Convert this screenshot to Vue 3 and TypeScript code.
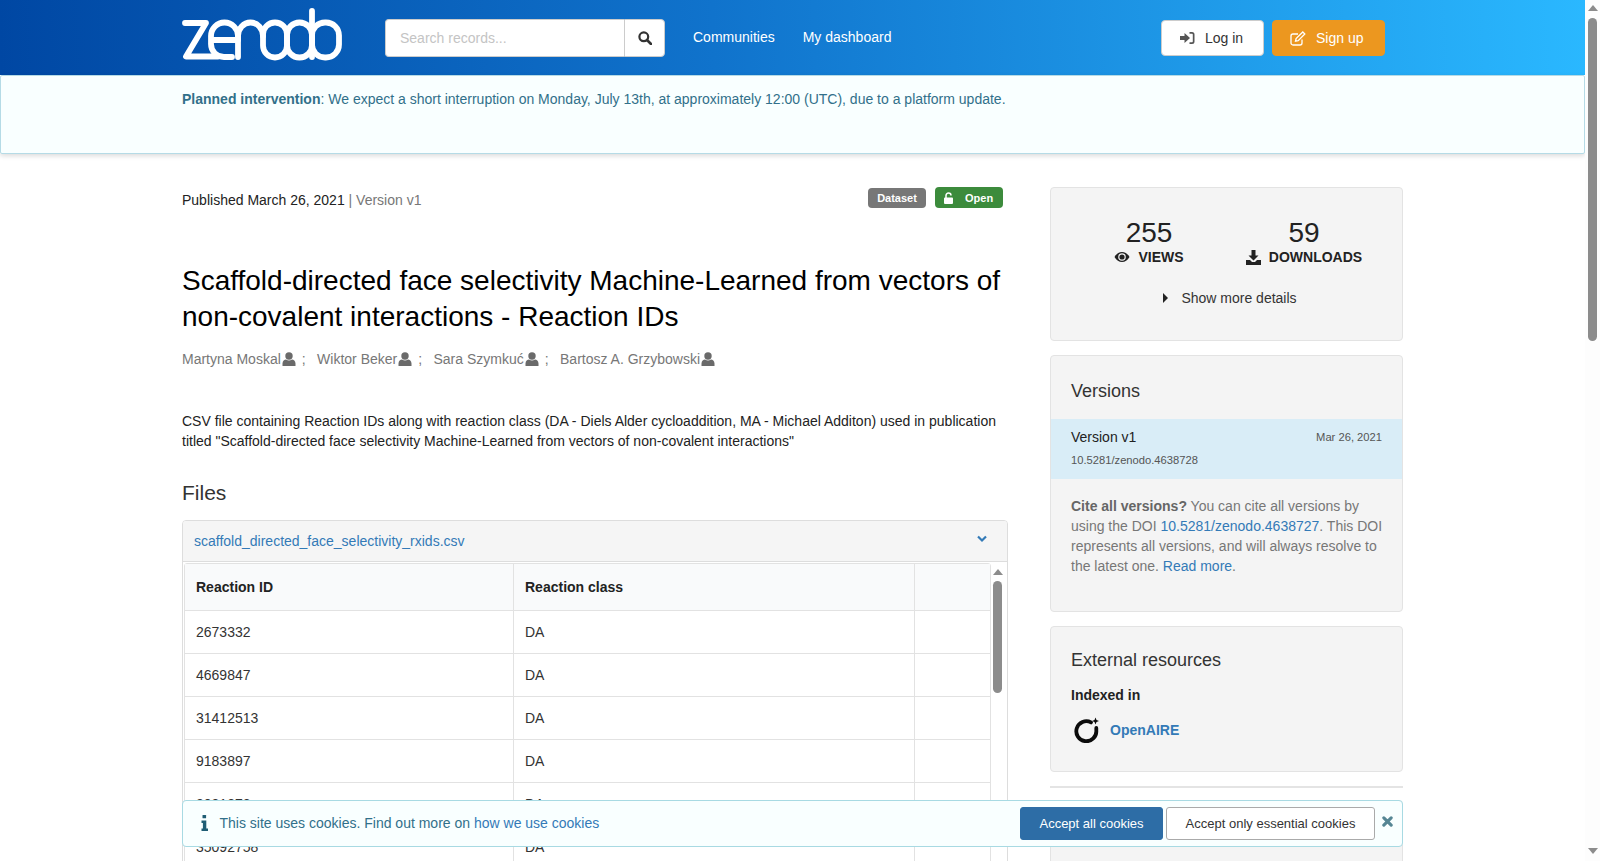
<script setup lang="ts">
const authors: string[] = ['Martyna Moskal', 'Wiktor Beker', 'Sara Szymkuć', 'Bartosz A. Grzybowski']
const rows: string[] = ['2673332', '4669847', '31412513', '9183897', '3081872', '35092758', '1184207']
</script>

<template>
  <div class="page">
    <div class="viewport">
      <header class="topbar">
        <div class="bar-inner">
          <svg class="logo" viewBox="182 8 160 53" fill="none" stroke="#fff" stroke-width="5.8" stroke-linecap="round" stroke-linejoin="round" aria-label="zenodo">
            <path d="M185,23 H206 L186,56.5 H218" />
            <path d="M211,40 H238 V36 a13.5,13.5 0 0 0 -27,0 V44 a13,13 0 0 0 13,13 H232" />
            <path d="M238,57 V36 a12.5,13.5 0 0 1 25,0" />
            <rect x="263" y="22.5" width="24" height="35" rx="12" />
            <rect x="287" y="22.5" width="25" height="35" rx="12.5" />
            <path d="M312,11 V57" />
            <rect x="312" y="22.5" width="27" height="35" rx="13" />
          </svg>
          <div class="search">
            <div class="search-input">Search records...</div>
            <div class="search-btn">
              <svg width="14" height="14" viewBox="0 0 14 14" fill="none" stroke="#333" stroke-width="2.2"><circle cx="5.8" cy="5.8" r="4.4" /><path d="M9 9l4 4" stroke-linecap="round" stroke-width="2.6" /></svg>
            </div>
          </div>
          <nav class="nav">
            <a>Communities</a>
            <a>My dashboard</a>
          </nav>
          <div class="actions">
            <button class="btn-login">
              <svg width="15" height="14" viewBox="0 0 15 14" fill="#555"><path d="M0 5h4.500V2l5.500 5-5.500 5V9H0z" /><path d="M9.500 1H12a2.500 2.500 0 0 1 2.500 2.500v7A2.500 2.500 0 0 1 12 13H9.500v-1.700H12a.8.8 0 0 0 .8-.8v-7a.8.8 0 0 0-.8-.8H9.500z" /></svg>
              <span>Log in</span>
            </button>
            <button class="btn-signup">
              <svg width="16" height="15" viewBox="0 0 16 15" fill="none" stroke="#fff" stroke-width="1.300"><path d="M12 8.500v3.500a2 2 0 0 1-2 2H3a2 2 0 0 1-2-2V5a2 2 0 0 1 2-2h5" /><path d="M5.500 10.200l.6-2.700L12.800 1l2 2-6.600 6.600z" /></svg>
              <span>Sign up</span>
            </button>
          </div>
        </div>
      </header>

      <div class="notice">
        <p><strong>Planned intervention</strong>: We expect a short interruption on Monday, July 13th, at approximately 12:00 (UTC), due to a platform update.</p>
      </div>

      <div class="content">
        <main class="main-col">
          <div class="meta">
            <div><span class="dark">Published March 26, 2021</span> <span class="muted">| Version v1</span></div>
            <div class="badges">
              <span class="badge gray">Dataset</span>
              <span class="badge green">
                <svg width="11" height="12" viewBox="0 0 11 12" fill="#fff"><path d="M1 5.500h7a1 1 0 0 1 1 1V11a1 1 0 0 1-1 1H1a1 1 0 0 1-1-1V6.500a1 1 0 0 1 1-1z" /><path d="M2 6V3.500a2.500 2.500 0 0 1 5 0" fill="none" stroke="#fff" stroke-width="1.500" /></svg>
                Open
              </span>
            </div>
          </div>
          <h1>Scaffold-directed face selectivity Machine-Learned from vectors of non-covalent interactions - Reaction IDs</h1>
          <div class="authors">
            <template v-for="(a, i) in authors" :key="a">
              <span>{{ a }}</span>
              <svg class="user" width="14" height="14" viewBox="0 0 14 14" fill="#6a6a6a"><circle cx="7" cy="4" r="3.700" /><path d="M0.500 14v-2.500C0.500 9 2.500 7.500 4 7.500c1 .7 2 1 3 1s2-.3 3-1c1.500 0 3.500 1.500 3.500 4V14z" /></svg>
              <span v-if="i < authors.length - 1" class="sep">;</span>
            </template>
          </div>
          <p class="desc">CSV file containing Reaction IDs along with reaction class (DA - Diels Alder cycloaddition, MA - Michael Additon) used in publication titled "Scaffold-directed face selectivity Machine-Learned from vectors of non-covalent interactions"</p>
          <h2>Files</h2>
          <section class="file-panel">
            <div class="file-head">
              <a>scaffold_directed_face_selectivity_rxids.csv</a>
              <svg width="10" height="8" viewBox="0 0 10 8" fill="none" stroke="#337ab7" stroke-width="2.200"><path d="M1 1.500l4 4 4-4" /></svg>
            </div>
            <div class="preview">
              <table>
                <colgroup><col class="c1" /><col class="c2" /><col /></colgroup>
                <thead><tr><th>Reaction ID</th><th>Reaction class</th><th></th></tr></thead>
                <tbody>
                  <tr v-for="r in rows" :key="r"><td>{{ r }}</td><td>DA</td><td></td></tr>
                </tbody>
              </table>
              <div class="inner-scroll">
                <span class="up small"></span>
                <span class="inner-thumb"></span>
              </div>
            </div>
          </section>
        </main>

        <aside class="side">
          <section class="card stats">
            <div class="stat-row">
              <div class="stat">
                <div class="num">255</div>
                <div class="label">
                  <svg width="16" height="12" viewBox="0 0 16 12"><path d="M0.500 6C2.500 2.500 5 1 8 1s5.500 1.500 7.500 5c-2 3.500-4.500 5-7.500 5S2.500 9.500 0.500 6z" fill="#222" /><circle cx="8" cy="6" r="3.800" fill="#f4f4f4" /><circle cx="8" cy="6" r="2.600" fill="#222" /></svg>
                  VIEWS
                </div>
              </div>
              <div class="stat">
                <div class="num">59</div>
                <div class="label">
                  <svg width="15" height="15" viewBox="0 0 15 15" fill="#222"><path d="M5.500 0h4v5.500h3L7.500 10.500 2.500 5.500h3z" /><path d="M0 10h4l2 2h3l2-2h4v5H0z" /></svg>
                  DOWNLOADS
                </div>
              </div>
            </div>
            <div class="more">
              <svg width="5" height="10" viewBox="0 0 5 10" fill="#222"><path d="M0 0l5 5-5 5z" /></svg>
              <span>Show more details</span>
            </div>
          </section>

          <section class="card versions">
            <h3>Versions</h3>
            <div class="version-row">
              <div class="v-top"><span class="v-name">Version v1</span><span class="v-small">Mar 26, 2021</span></div>
              <div class="v-small v-doi">10.5281/zenodo.4638728</div>
            </div>
            <p class="cite"><strong>Cite all versions?</strong> You can cite all versions by using the DOI <a>10.5281/zenodo.4638727</a>. This DOI represents all versions, and will always resolve to the latest one. <a>Read more</a>.</p>
          </section>

          <section class="card external">
            <h3>External resources</h3>
            <div class="indexed">Indexed in</div>
            <div class="openaire">
              <svg width="26" height="26" viewBox="0 0 26 26" fill="none"><path d="M17 5.400A10 10 0 1 0 22.300 13.500V11" stroke="#0b0b0b" stroke-width="3.800" stroke-linecap="round" /><path d="M21.500 0.500l1 2.500 2.500 1-2.500 1-1 2.500-1-2.500-2.500-1 2.500-1z" fill="#0b0b0b" /></svg>
              <a>OpenAIRE</a>
            </div>
          </section>
          <hr />
          <section class="card trailing"></section>
        </aside>
      </div>

      <div class="cookie">
        <svg class="cookie-i" width="7" height="16" viewBox="0 0 7 16" fill="#1f5d74"><rect x="1.500" y="0" width="3.600" height="3.200" rx=".5" /><path d="M0.500 5.500h4.800v8H7V16H0.500v-2.500h1.400V8H0.500z" /></svg>
        <span class="cookie-text">This site uses cookies. Find out more on <a>how we use cookies</a></span>
        <button class="ck-primary">Accept all cookies</button>
        <button class="ck-default">Accept only essential cookies</button>
        <svg class="ck-close" width="11" height="11" viewBox="0 0 12 12" stroke="#568694" stroke-width="3.400" stroke-linecap="round"><path d="M2 2l8 8M10 2l-8 8" /></svg>
      </div>
    </div>

    <div class="page-scroll">
      <span class="up"></span>
      <span class="thumb"></span>
      <span class="down"></span>
    </div>
  </div>
</template>

<style>
html, body { margin: 0; height: 100%; overflow: hidden; background: #fff; }
</style>

<style scoped>
* { box-sizing: border-box; }
.page {
  display: flex;
  height: 861px;
  font-family: "Liberation Sans", Arial, sans-serif;
  font-size: 14px;
  line-height: 20px;
  color: #333;
  overflow: hidden;
}
.viewport { flex: 1; min-width: 0; position: relative; height: 861px; overflow: hidden; }

.topbar {
  height: 75px;
  background: linear-gradient(88deg, #0047a3 0%, #1073cc 45%, #2ab8ff 100%);
  padding-left: 182px;
}
.bar-inner { width: 1203px; height: 75px; display: flex; align-items: center; position: relative; }
.logo { width: 160px; height: 53px; margin-top: -6px; flex: none; }
.search { display: flex; width: 280px; height: 38px; margin-left: 43px; margin-top: 1px; }
.search-input {
  width: 239px; background: #fff; border: 1px solid #ccc; border-right: 0;
  border-radius: 4px 0 0 4px; padding: 8px 14px; color: #c4c4c4; line-height: 20px;
}
.search-btn {
  flex: 1; background: #fff; border: 1px solid #ccc; border-radius: 0 4px 4px 0;
  display: flex; align-items: center; justify-content: center;
}
.nav { display: flex; gap: 28px; margin-left: 28px; color: #fff; margin-top: -1px; }
.actions { margin-left: auto; display: flex; gap: 8px; margin-top: 1px; }
.actions button {
  height: 36px; border-radius: 4px; font: inherit; display: flex; align-items: center; padding: 0;
}
.btn-login { width: 103px; background: #fff; border: 1px solid #ccc; color: #333; padding-left: 18px !important; gap: 10px; }
.btn-signup { width: 113px; background: #ec971f; border: 1px solid #ec971f; color: #fff; padding-left: 17px !important; gap: 10px; }

.notice {
  height: 79px;
  background: #f9ffff;
  border: 1px solid #b5dbe6;
  border-radius: 2px;
  box-shadow: 0 2px 5px rgba(0, 0, 0, .14);
  color: #31708a;
  padding: 13px 0 0 181px;
  position: relative;
}
.notice p { margin: 0; }

.content {
  padding-left: 182px;
  display: grid;
  grid-template-columns: 826px 353px;
  column-gap: 42px;
  width: 1403px;
}
.main-col { padding-top: 33px; min-width: 0; }
.meta { display: flex; justify-content: space-between; height: 38px; margin-top: 3px; }
.dark { color: #222; }
.muted { color: #777; }
.badges { display: flex; gap: 9px; margin-top: -3px; margin-right: 5px; align-items: flex-start; }
.badge {
  font-size: 11px; font-weight: 700; color: #fff; border-radius: 4px;
  height: 20px; line-height: 20px; display: flex; align-items: center;
}
.gray { background: #777; width: 58px; justify-content: center; margin-top: 1px; }
.green { background: #3c8b3c; width: 68px; height: 21px; padding-left: 9px; gap: 10px; }
h1 { font-size: 28px; font-weight: 400; line-height: 36px; color: #000; margin: 35px 0 0; width: 826px; }
.authors { display: flex; align-items: center; color: #777; height: 20px; margin-top: 14px; }
.user { margin-left: 1px; }
.sep { margin: 0 11.400px 0 6px; }
.desc { margin: 42px 0 0; color: #222; }
h2 { font-size: 21px; font-weight: 400; line-height: 24px; color: #333; margin: 30px 0 0; }
.file-panel { margin: 15px 0 0; border: 1px solid #ddd; border-radius: 4px; width: 826px; }
.file-head {
  height: 41px; background: #f5f5f5; border-bottom: 1px solid #ddd; border-radius: 3px 3px 0 0;
  padding: 0 20px 0 11px; display: flex; align-items: center; justify-content: space-between;
  color: #337ab7;
}
.file-head svg { margin-top: -4px; }
.preview { display: flex; padding: 1px 0 0 1px; }
table { border-collapse: separate; border-spacing: 0; table-layout: fixed; width: 807px; flex: none; border: 1px solid #e2e2e2; border-radius: 3px; }
.c1 { width: 329px; }
.c2 { width: 401px; }
th, td { text-align: left; padding: 0 11px; border-right: 1px solid #e2e2e2; border-bottom: 1px solid #e2e2e2; font-size: 14px; }
th:last-child, td:last-child { border-right: 0; }
th { height: 47px; background: #f9fafb; font-weight: 700; color: #222; }
td { height: 43px; color: #333; background: #fff; }
.inner-scroll { flex: 1; position: relative; }
.inner-thumb { position: absolute; left: 2px; top: 18px; width: 9px; height: 112px; background: #8c8c8c; border-radius: 5px; }
.up { display: block; width: 0; height: 0; border: 5px solid transparent; border-top: 0; border-bottom: 6px solid #8c8c8c; }
.up.small { position: absolute; left: 2px; top: 6px; }

.side { padding-top: 33px; min-width: 0; }
.card { background: #f4f4f4; border: 1px solid #e3e3e3; border-radius: 4px; color: #333; }
.stats { height: 154px; margin-bottom: 14px; padding-top: 30px; }
.stat-row { display: flex; padding-left: 63px; }
.stat { text-align: center; }
.stat:first-child { width: 70px; }
.stat:last-child { margin-left: 61px; width: 118px; }
.num { font-size: 28px; line-height: 29px; color: #222; }
.label { font-weight: 700; color: #222; display: flex; align-items: center; justify-content: center; gap: 8px; white-space: nowrap; line-height: 20px; margin-top: 0; }
.more { margin-top: 21px; display: flex; align-items: center; justify-content: center; gap: 13px; color: #333; padding-left: 7px; }
.versions { height: 257px; margin-bottom: 14px; }
h3 { font-size: 18px; font-weight: 400; line-height: 20px; color: #333; margin: 0; padding: 0 20px; }
.versions h3 { padding-top: 25px; height: 63px; }
.version-row { background: #d9edf7; height: 60px; padding: 8px 20px 0; }
.v-top { display: flex; justify-content: space-between; align-items: center; }
.v-name { color: #222; }
.v-small { font-size: 11.200px; color: #555; }
.v-doi { margin-top: 3px; }
.cite { margin: 17px 15px 0 20px; color: #777; }
.cite strong { color: #666; }
a { color: #337ab7; text-decoration: none; }
.nav a { color: #fff; }
.external { height: 146px; margin-bottom: 14px; }
.external h3 { padding-top: 23px; }
.indexed { font-weight: 700; color: #222; padding: 15px 20px 0; }
.openaire { display: flex; align-items: center; gap: 10px; padding: 12px 20px 0 23px; }
.openaire a { font-weight: 700; }
hr { border: 0; border-top: 2px solid #e4e4e4; margin: 0 0 12px; }
.trailing { height: 120px; }

.cookie {
  position: absolute; left: 182px; top: 800px; width: 1221px; height: 47px;
  background: #f9ffff; border: 1px solid #a8dae3; border-radius: 4px;
  display: flex; align-items: center; color: #31708a;
}
.cookie-i { margin-left: 18px; margin-top: -1px; }
.cookie-text { margin: -2px 0 0 11.500px; flex: 1; }
.cookie button { height: 33px; border-radius: 3px; font: inherit; font-size: 13px; padding: 0; }
.ck-primary { width: 143px; background: #2d6da6; border: 1px solid #2d6da6; color: #fff; margin-right: 3px; }
.ck-default { width: 209px; background: #fff; border: 1px solid #aaa; color: #333; }
.ck-close { margin: -5px 9px 0 7px; }

.page-scroll { width: 15px; flex: none; position: relative; background: #fdfdfd; }
.page-scroll .up { position: absolute; left: 3px; top: 5px; }
.thumb { position: absolute; left: 3px; top: 18px; width: 9px; height: 323px; background: #8c8c8c; border-radius: 5px; }
.down { position: absolute; left: 3px; top: 848px; width: 0; height: 0; border: 5px solid transparent; border-bottom: 0; border-top: 6px solid #8c8c8c; }
</style>
